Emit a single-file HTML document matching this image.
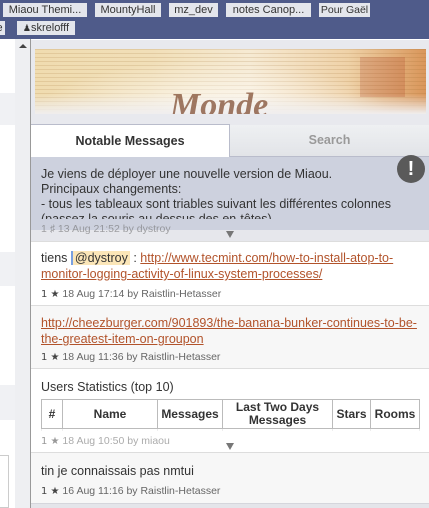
<!DOCTYPE html>
<html><head><meta charset="utf-8"><style>
*{margin:0;padding:0;box-sizing:border-box}
body{width:429px;height:508px;overflow:hidden;position:relative;background:#fff;font-family:"Liberation Sans",sans-serif;color:#333}
.a{position:absolute}
.top{left:0;top:0;width:429px;height:39px;background:#4f5b8a}
.btn{position:absolute;height:14px;background:#e4e6ec;font-size:11px;line-height:14px;color:#333;white-space:nowrap;overflow:hidden;text-align:center}
.panel{left:31px;top:40px;width:398px;height:468px;background:#e8e9ee}
.msg{position:absolute;left:31px;width:398px;font-size:12.5px;line-height:16px;padding-left:10px;color:#333}
.meta{position:absolute;left:10px;font-size:10.5px;color:#666}
.meta b{font-weight:normal;font-family:"DejaVu Sans",sans-serif;font-size:10px;color:#444}
a{color:#b2532b;text-decoration:underline}
table{border-collapse:collapse;font-size:12px;font-weight:bold;color:#333}
td{border:1px solid #bbb;text-align:center;padding:0 2px}
</style></head><body>
<div class="a top"></div>
<div class="btn" style="left:3px;top:3px;width:84px">Miaou Themi...</div>
<div class="btn" style="left:95px;top:3px;width:66px">MountyHall</div>
<div class="btn" style="left:169px;top:3px;width:49px">mz_dev</div>
<div class="btn" style="left:226px;top:3px;width:85px">notes Canop...</div>
<div class="btn" style="left:319px;top:3px;width:51px;font-size:10.5px">Pour Gaël</div>
<div class="btn" style="left:-6px;top:21px;width:11px">e</div>
<div class="btn" style="left:17px;top:21px;width:58px"><span style="font-size:9px">&#9823;</span>skrelofff</div>

<!-- left strip -->
<div class="a" style="left:0;top:39px;width:15px;height:469px;background:#fff"></div>
<div class="a" style="left:0;top:93px;width:15px;height:32px;background:#f0f1f4"></div>
<div class="a" style="left:0;top:252px;width:15px;height:34px;background:#f0f1f4"></div>
<div class="a" style="left:0;top:385px;width:15px;height:35px;background:#f0f1f4"></div>
<div class="a" style="left:0;top:455px;width:9px;height:53px;border:1px solid #ccc;border-left:none;background:#fff"></div>
<div class="a" style="left:15px;top:39px;width:15px;height:469px;background:#eeeff2"></div>
<div class="a" style="left:19px;top:44px;width:0;height:0;border-left:4px solid transparent;border-right:4px solid transparent;border-bottom:4px solid #444"></div>
<div class="a" style="left:30px;top:39px;width:1px;height:469px;background:#999"></div>

<div class="a panel"></div>
<!-- banner -->
<div class="a" style="left:35px;top:49px;width:391px;height:65px;background:linear-gradient(90deg,#f0dcb0 0%,#f1dfb8 30%,#f6ead3 55%,#efd2a8 80%,#d9965a 100%);overflow:hidden">
 <div class="a" style="left:0;top:0;width:391px;height:65px;background:repeating-linear-gradient(0deg,rgba(150,100,40,.16) 0 1px,transparent 1px 4px)"></div>
 <div class="a" style="left:0;top:0;width:391px;height:65px;background:radial-gradient(ellipse at 45% 110%,rgba(255,255,255,.9),transparent 60%)"></div>
 <div class="a" style="left:0;top:45px;width:391px;height:20px;background:linear-gradient(180deg,transparent,#f0eeee)"></div>
 <div class="a" style="left:135px;top:38px;font-family:'Liberation Serif',serif;font-size:34px;font-weight:bold;font-style:italic;color:#7a4428;opacity:.7">Monde</div>
 <div class="a" style="left:325px;top:8px;width:45px;height:40px;background:rgba(170,60,30,.22)"></div>
</div>
<!-- tabs -->
<div class="a" style="left:31px;top:124px;width:199px;height:33px;background:#fff;border:1px solid #b9bccb;border-bottom:none;border-left:none;font-size:12.5px;font-weight:bold;text-align:center;line-height:33px;color:#333">Notable Messages</div>
<div class="a" style="left:230px;top:125px;width:199px;height:31px;background:linear-gradient(#eef0f2,#e2e4e8);font-size:12.5px;font-weight:bold;text-align:center;line-height:31px;color:#999">Search</div>
<div class="a" style="left:230px;top:156px;width:199px;height:1px;background:#b9bccb"></div>

<!-- msg1 -->
<div class="msg" style="top:157px;height:84px;background:#e6e7ec">
 <div class="a" style="left:0;top:0;width:398px;height:73px;background:#cdd1de"></div>
 <div class="a" style="left:10px;top:10px;width:380px;height:52px;overflow:hidden;line-height:15px">Je viens de déployer une nouvelle version de Miaou.<br>Principaux changements:<br>- tous les tableaux sont triables suivant les différentes colonnes<br>(passez la souris au dessus des en-têtes)</div>
 <div class="meta" style="top:64px;opacity:.55">1 &#9839; 13 Aug 21:52 by dystroy</div>
 <div class="a" style="left:195px;top:74px;width:0;height:0;border-left:4px solid transparent;border-right:4px solid transparent;border-top:7px solid #777"></div>
</div>
<div class="a" style="left:397px;top:155px;width:28px;height:28px;border-radius:50%;background:#5a5a5a;color:#fff;font-size:20px;font-weight:bold;text-align:center;line-height:28px">!</div>
<div class="a" style="left:31px;top:241px;width:398px;height:1px;background:#ddd"></div>
<!-- msg2 -->
<div class="msg" style="top:242px;height:63px;background:#fff">
 <div style="position:absolute;left:10px;top:8px;width:380px">tiens <span style="border-left:2px solid #7aa0e0;background:#fbe6b8;padding:0 2px">@dystroy</span> : <a>http://www.tecmint.com/how-to-install-atop-to-monitor-logging-activity-of-linux-system-processes/</a></div>
 <div class="meta" style="top:44px"><b>1 ★</b> 18 Aug 17:14 by Raistlin-Hetasser</div>
</div>
<div class="a" style="left:31px;top:305px;width:398px;height:1px;background:#ddd"></div>
<!-- msg3 -->
<div class="msg" style="top:306px;height:62px;background:#f7f7f7">
 <div style="position:absolute;left:10px;top:9px;width:380px"><a>http://cheezburger.com/901893/the-banana-bunker-continues-to-be-the-greatest-item-on-groupon</a></div>
 <div class="meta" style="top:43px"><b>1 ★</b> 18 Aug 11:36 by Raistlin-Hetasser</div>
</div>
<div class="a" style="left:31px;top:368px;width:398px;height:1px;background:#ddd"></div>
<!-- msg4 -->
<div class="msg" style="top:369px;height:83px;background:#fff">
 <div style="position:absolute;left:10px;top:10px">Users Statistics (top 10)</div>
 <div class="a" style="left:10px;top:30px;width:380px;height:32px;overflow:hidden">
 <table style="width:379px"><tr style="height:29px"><td style="width:21px">#</td><td style="width:95px">Name</td><td style="width:65px">Messages</td><td style="width:110px;line-height:13px">Last Two Days Messages</td><td style="width:38px">Stars</td><td>Rooms</td></tr><tr><td>1</td><td></td><td></td><td></td><td></td><td></td></tr></table></div>
 <div class="a" style="left:0;top:60px;width:398px;height:12px;background:linear-gradient(rgba(255,255,255,.7),#fff)"></div>
 <div class="meta" style="top:64px;opacity:.55"><b>1 ★</b> 18 Aug 10:50 by miaou</div>
 <div class="a" style="left:195px;top:74px;width:0;height:0;border-left:4px solid transparent;border-right:4px solid transparent;border-top:7px solid #777"></div>
</div>
<div class="a" style="left:31px;top:452px;width:398px;height:1px;background:#ddd"></div>
<!-- msg5 -->
<div class="msg" style="top:453px;height:50px;background:#f7f7f7">
 <div style="position:absolute;left:10px;top:10px">tin je connaissais pas nmtui</div>
 <div class="meta" style="top:30px"><b>1 ★</b> 16 Aug 11:16 by Raistlin-Hetasser</div>
</div>
<div class="a" style="left:31px;top:503px;width:398px;height:5px;background:#e4e5ea;border-top:1px solid #d5d6dc"></div>
</body></html>
